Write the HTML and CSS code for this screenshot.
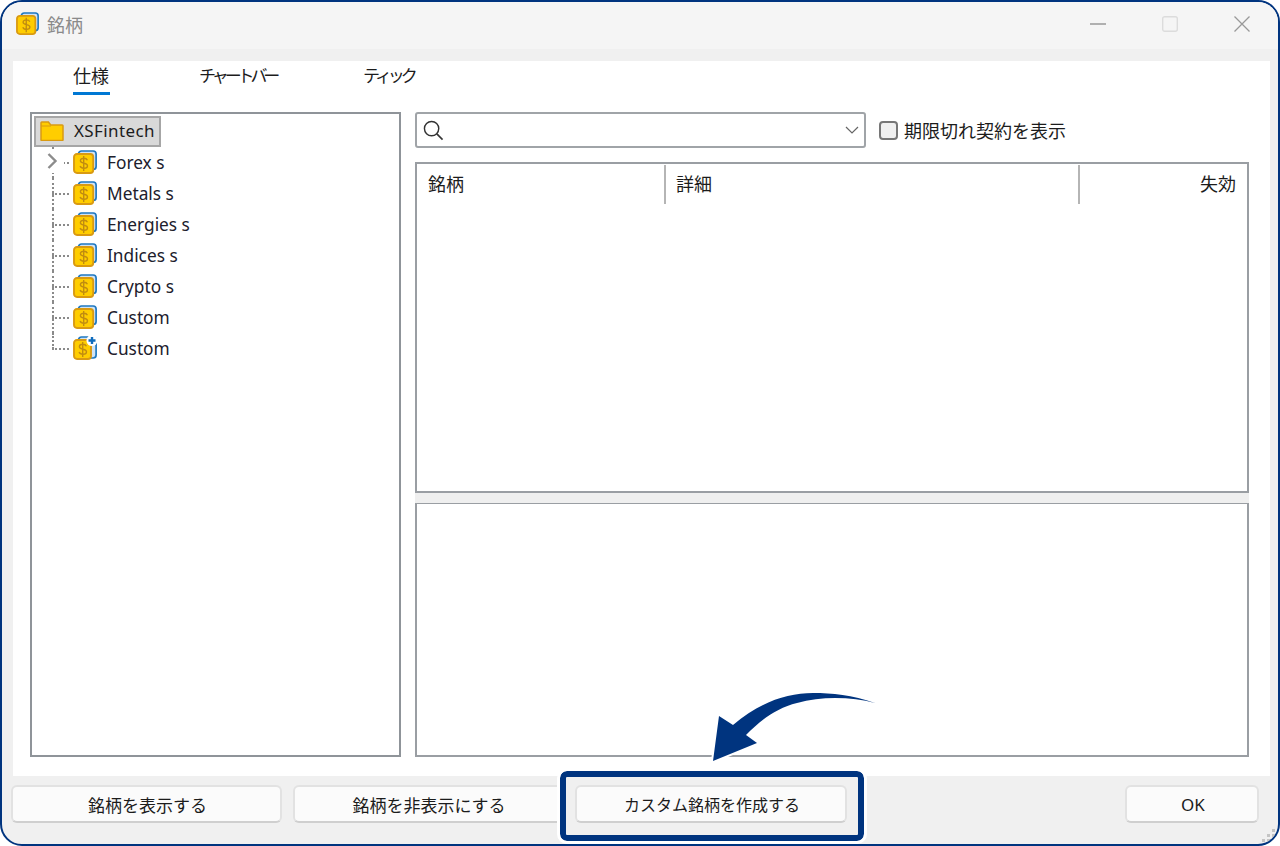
FILE: index.html
```html
<!DOCTYPE html>
<html lang="ja">
<head>
<meta charset="utf-8">
<title>銘柄</title>
<link rel="stylesheet" href="styles.css">
</head>
<body>
<svg class="defs" width="0" height="0" aria-hidden="true">
  <symbol id="coin" viewBox="0 0 24 24">
    <rect x="5.5" y="1" width="17.6" height="18.5" rx="3" fill="#cfe3f5" stroke="#1f78c1" stroke-width="1.7"/>
    <rect x="1" y="4" width="19.2" height="19" rx="3" fill="#ffcd00" stroke="#d99a12" stroke-width="1.9"/>
    <path d="M14.4 10.2c-.5-1.3-1.9-2-3.6-2-1.9 0-3.4 1-3.4 2.5 0 3.3 7.1 1.7 7.1 5 0 1.5-1.5 2.5-3.6 2.5-1.8 0-3.3-.8-3.8-2.2M10.7 6v15" fill="none" stroke="#c08c10" stroke-width="1.4"/>
  </symbol>
  <symbol id="coinplus" viewBox="0 0 24 24">
    <rect x="5.5" y="1" width="17.6" height="21" rx="3" fill="#cfe3f5" stroke="#1f78c1" stroke-width="1.7"/>
    <rect x="1" y="4" width="17" height="19" rx="3" fill="#ffcd00" stroke="#d99a12" stroke-width="1.9"/>
    <path d="M13.4 10.2c-.5-1.3-1.9-2-3.6-2-1.9 0-3.4 1-3.4 2.5 0 3.3 7.1 1.7 7.1 5 0 1.5-1.5 2.5-3.6 2.5-1.8 0-3.3-.8-3.8-2.2M9.7 6v15" fill="none" stroke="#c08c10" stroke-width="1.4"/>
    <circle cx="19" cy="4.5" r="5.5" fill="#fff"/>
    <path d="M19 1v7M15.5 4.5h7" stroke="#0f6cbd" stroke-width="2.4"/>
  </symbol>
</svg>
<div class="window">
  <header class="titlebar">
    <svg class="title-icon"><use href="#coin"/></svg>
    <span class="title-text">銘柄</span>
    <div class="controls">
      <svg class="ctl" viewBox="0 0 16 16"><path d="M0 8h16" stroke="#999" stroke-width="1.4"/></svg>
      <svg class="ctl" viewBox="0 0 16 16"><rect x=".7" y=".7" width="14.6" height="14.6" rx="2" fill="none" stroke="#dcdcdc" stroke-width="1.4"/></svg>
      <svg class="ctl" viewBox="0 0 16 16"><path d="M.5.5l15 15M15.5.5l-15 15" stroke="#999" stroke-width="1.3"/></svg>
    </div>
  </header>
  <main class="content">
    <nav class="tabs">
      <span class="tab tab-active">仕様</span>
      <span class="tab tab-kana tab-bars">チャートバー</span>
      <span class="tab tab-kana tab-tick">ティック</span>
    </nav>
    <div class="panes">
      <section class="tree">
        <div class="tree-root">
          <svg class="folder" viewBox="0 0 24 20"><path d="M1 18.8V1.8C1 1.3 1.3 1 1.8 1h6.6l2.4 3h11.4c.5 0 .8.3.8.8v14c0 .5-.3.7-.8.7H1.8c-.5 0-.8-.2-.8-.7z" fill="#ffcd00" stroke="#d99a12" stroke-width="1.5"/><path d="M1 5h10" stroke="#d99a12" stroke-width="1.2"/></svg>
          <span class="root-label">XSFintech</span>
        </div>
        <ul class="tree-list">
          <li class="node node-first"><svg class="chev" viewBox="0 0 17 24"><path d="M1.5 5l7 7-7 7" fill="none" stroke="#8c8c8c" stroke-width="2.4"/></svg><svg class="coin"><use href="#coin"/></svg>Forex s</li>
          <li class="node"><svg class="coin"><use href="#coin"/></svg>Metals s</li>
          <li class="node"><svg class="coin"><use href="#coin"/></svg>Energies s</li>
          <li class="node"><svg class="coin"><use href="#coin"/></svg>Indices s</li>
          <li class="node"><svg class="coin"><use href="#coin"/></svg>Crypto s</li>
          <li class="node"><svg class="coin"><use href="#coin"/></svg>Custom</li>
          <li class="node node-last"><svg class="coin"><use href="#coinplus"/></svg>Custom</li>
        </ul>
      </section>
      <section class="right">
        <div class="search-row">
          <div class="search">
            <svg class="glass" viewBox="0 0 22 22"><circle cx="9" cy="9" r="7.5" fill="none" stroke="#333" stroke-width="1.5"/><path d="M14.5 14.5l6 6" stroke="#333" stroke-width="1.7"/></svg>
            <svg class="drop" viewBox="0 0 14 8"><path d="M1 1l6 6 6-6" fill="none" stroke="#666" stroke-width="1.2"/></svg>
          </div>
          <label class="expired"><span class="check"></span>期限切れ契約を表示</label>
        </div>
        <div class="table">
          <div class="thead">
            <div class="th th-symbol">銘柄</div>
            <div class="th th-detail">詳細</div>
            <div class="th th-expire">失効</div>
          </div>
        </div>
        <div class="splitter"></div>
        <div class="detail"></div>
      </section>
    </div>
  </main>
  <footer class="footer">
    <button class="btn btn-show">銘柄を表示する</button>
    <button class="btn btn-hide">銘柄を非表示にする</button>
    <button class="btn btn-custom">カスタム銘柄を作成する</button>
    <button class="btn btn-ok">OK</button>
  </footer>
  <div class="highlight"></div>
  <svg class="arrow" viewBox="0 0 180 90"><path d="M173 19C150 11 130 9 111 9 85 9 58 18 31 41L17 32 11 77 55 59 44 51C60 35 75 24 95 19 120 12 150 13 173 19Z" fill="#00347f" stroke="#fff" stroke-width="4" paint-order="stroke"/></svg>
  <svg class="grip" viewBox="0 0 16 16"><g fill="#c4c4c4"><rect x="11" y="1" width="3" height="3"/><rect x="6" y="6" width="3" height="3"/><rect x="11" y="6" width="3" height="3"/><rect x="1" y="11" width="3" height="3"/><rect x="6" y="11" width="3" height="3"/><rect x="11" y="11" width="3" height="3"/></g></svg>
</div>
</body>
</html>
```
FILE: styles.css
```css
* { box-sizing: border-box; }
html, body { margin: 0; padding: 0; background: #fff; }
body { font-family: "Noto Sans", "Noto Sans CJK JP", sans-serif; color: #1c1c1c; overflow: hidden; }
.defs { position: absolute; }
.window {
  position: relative;
  width: 1280px; height: 846px;
  border: 2px solid #00347f;
  border-radius: 22px;
  background: #f0f0f0;
  display: flex; flex-direction: column;
  overflow: hidden;
}
.titlebar { height: 47px; flex: none; display: flex; align-items: center; padding: 0 28px 4px 14px; background: #f5f5f5; }
.title-icon { width: 23px; height: 23px; }
.title-text { margin-left: 8px; font-size: 18px; color: #8a8a8a; font-family: "Noto Sans CJK JP", sans-serif; }
.controls { margin-left: auto; display: flex; gap: 56px; align-items: center; }
.ctl { width: 16px; height: 16px; display: block; }
.content { flex: none; margin: 12px 8px 0 11px; height: 715px; background: #fff; display: flex; flex-direction: column; padding: 0 21px 19px 17px; }
.tabs { height: 51px; flex: none; display: flex; padding-left: 43px; }
.tab { height: 34px; font-size: 18px; line-height: 28px; font-family: "Noto Sans CJK JP", sans-serif; color: #1c1c1c; }
.tab-active { width: 37px; border-bottom: 3px solid #0078d4; }
.tab-kana { letter-spacing: -4.1px; font-size: 17px; }
.tab-bars { margin-left: 89px; width: 164px; }
.tab-tick { width: 60px; }
.panes { flex: 1; display: flex; gap: 14px; min-height: 0; }
.tree { width: 371px; flex: none; border: 2px solid #8f9499; padding: 2px; }
.tree-root { width: 127px; height: 31px; display: flex; align-items: center; gap: 10px; padding: 0 0 2px 4px; background: #d9d9d9; border: 2px solid #a6a6a6; font-size: 17px; color: #1c1c1c; }
.root-label { letter-spacing: .4px; }
.folder { width: 24px; height: 20px; flex: none; }
.tree-list { list-style: none; margin: 0; padding: 0; }
.node { position: relative; height: 31px; display: flex; align-items: center; padding: 0 0 1px 39px; font-size: 17.3px; color: #20202c; }
.node::before { content: ""; position: absolute; left: 18px; top: 15px; width: 17px; border-top: 2px dotted #8a8a8a; }
.node::after { content: ""; position: absolute; left: 18px; top: 0; height: 31px; border-left: 2px dotted #8a8a8a; }
.node-last::after { height: 16px; }
.chev { position: absolute; left: 13px; top: 2px; width: 17px; height: 24px; background: #fff; z-index: 1; }
.coin { width: 24px; height: 24px; margin-right: 10px; flex: none; }
.right { flex: 1; min-width: 0; display: flex; flex-direction: column; }
.search-row { display: flex; gap: 13px; align-items: center; height: 36px; flex: none; }
.search { width: 451px; height: 36px; border: 2px solid #a0a4a8; border-radius: 3px; display: flex; align-items: center; justify-content: space-between; padding: 0 5px 0 6px; }
.glass { width: 21px; height: 21px; }
.drop { width: 14px; height: 8px; }
.expired { display: flex; align-items: center; gap: 6px; font-size: 18px; font-family: "Noto Sans CJK JP", sans-serif; color: #1c1c1c; }
.check { width: 19px; height: 19px; border: 2px solid #777; border-radius: 4px; background: #f0f0f0; }
.table { height: 331px; flex: none; margin-top: 14px; border: 2px solid #9a9ea3; }
.thead { display: flex; height: 40px; padding-top: 1px; }
.th { font-size: 18px; line-height: 36px; font-family: "Noto Sans CJK JP", sans-serif; color: #1c1c1c; }
.th-symbol { width: 247px; padding-left: 11px; }
.th-detail { width: 414px; padding-left: 10px; border-left: 2px solid #b5b5b5; }
.th-expire { flex: 1; text-align: right; padding-right: 11px; border-left: 2px solid #b5b5b5; }
.splitter { height: 10px; flex: none; background: #efefef; }
.detail { flex: 1; border: 2px solid #9a9ea3; border-top-width: 1px; }
.footer { flex: none; height: 68px; display: flex; padding: 9px 19px 0 9px; }
.btn { height: 38px; background: #fbfbfb; border: 2px solid #e2e2e2; border-bottom-color: #cfcfcf; border-radius: 6px; font-size: 17px; font-family: "Noto Sans CJK JP", sans-serif; color: #1c1c1c; padding: 0 0 0 2px; }
.btn-show { width: 271px; }
.btn-hide { width: 270px; margin-left: 11px; }
.btn-custom { width: 272px; margin-left: 12px; font-size: 16px; }
.btn-ok { width: 134px; margin-left: auto; font-family: "Noto Sans", sans-serif; }
.highlight { position: absolute; left: 558px; top: 769px; width: 304px; height: 70px; border: 6px solid #00347f; border-radius: 7px; outline: 3px solid #fff; }
.arrow { position: absolute; left: 700px; top: 682px; width: 180px; height: 90px; }
.grip { position: absolute; right: 1px; bottom: 0; width: 16px; height: 16px; }
```
